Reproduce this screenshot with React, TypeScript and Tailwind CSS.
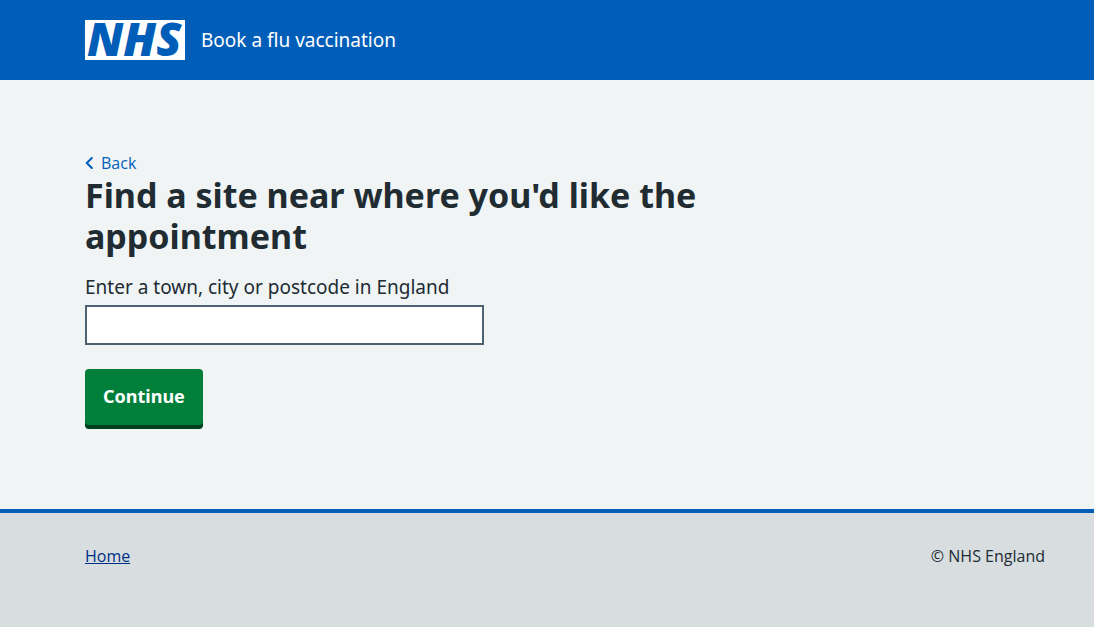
function NhsLogo() {
  return (
    <svg viewBox="0 0 100 40" role="img" aria-label="NHS" className="h-10 w-[100px] shrink-0 overflow-visible">
      <rect width="100" height="40" fill="#ffffff" />
      <text
        x="2"
        y="36"
        fontFamily="'Open Sans', 'Noto Sans', sans-serif"
        fontSize="46"
        fontWeight="800"
        fontStyle="italic"
        fill="#005eb8"
      >
        NHS
      </text>
    </svg>
  );
}

function Header() {
  return (
    <header className="bg-[#005eb8] py-5 pr-[49px] pl-[85px] text-white">
      <a href="#" className="flex items-center gap-4">
        <NhsLogo />
        <span className="text-[19px] leading-7">Book a flu vaccination</span>
      </a>
    </header>
  );
}

function BackLink() {
  return (
    <a href="#" className="flex items-center gap-2 self-start font-['Open_Sans','Noto_Sans',sans-serif] text-base leading-6 text-[#005eb8]">
      <svg viewBox="0 0 8 12" fill="none" stroke="currentColor" strokeWidth="2" className="h-3 w-2" aria-hidden="true">
        <path d="M6.8 1 1.8 6l5 5" strokeLinecap="round" strokeLinejoin="round" />
      </svg>
      Back
    </a>
  );
}

export default function App() {
  return (
    <div className="flex min-h-screen flex-col bg-[#f0f4f5] font-['Noto_Sans','Open_Sans',sans-serif] text-[#212b32]">
      <Header />
      <main className="flex flex-col pt-[71px] pr-[49px] pb-20 pl-[85px]">
        <BackLink />
        <h1 className="mb-4 max-w-[640px] text-[34px] leading-[41px] font-bold">
          Find a site near where you'd like the appointment
        </h1>
        <form className="flex flex-col items-start" onSubmit={(event) => event.preventDefault()}>
          <label htmlFor="location" className="mb-1 text-[19px] leading-7">
            Enter a town, city or postcode in England
          </label>
          <input
            id="location"
            name="location"
            type="text"
            className="mb-6 h-10 w-full max-w-[399px] border-2 border-[#4c6272] bg-white px-1 text-[19px]"
          />
          <button
            type="submit"
            className="mb-1 h-14 rounded bg-[#007f3b] px-[18px] pb-0.5 text-[18px] leading-7 font-bold text-white shadow-[0_4px_0_#00401e]"
          >
            Continue
          </button>
        </form>
      </main>
      <footer className="flex grow items-start justify-between border-t-4 border-[#005eb8] bg-[#d8dde0] pt-[31px] pr-[49px] pb-8 pl-[85px] font-['Open_Sans','Noto_Sans',sans-serif] text-base leading-6">
        <a href="#" className="text-[#003087] underline">
          Home
        </a>
        <p>© NHS England</p>
      </footer>
    </div>
  );
}
